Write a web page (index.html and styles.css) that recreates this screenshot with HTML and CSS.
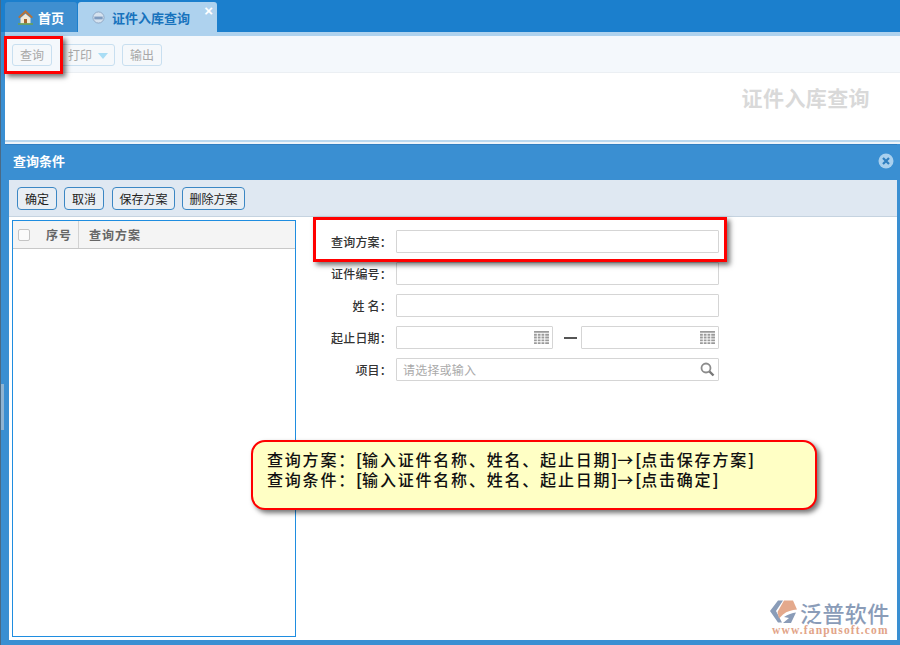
FILE: index.html
```html
<!DOCTYPE html>
<html lang="zh">
<head>
<meta charset="utf-8">
<title>证件入库查询</title>
<link rel="stylesheet" href="styles.css">
</head>
<body>
<div class="app">
  <div class="tabbar">
    <div class="tab tab-home">
      <svg class="home-icon" width="17" height="16" viewBox="0 0 17 16"><path d="M8.500 1 1 8l1.500 1.200L8.500 4l6 5.200L16 8z" fill="#b5733a"/><path d="M3.500 9 8.500 4.800 13.500 9v5.500h-10z" fill="#f3ead6"/><rect x="7" y="10" width="3" height="4.500" fill="#a5652e"/><path d="M1 15h15" stroke="#6fa34a" stroke-width="1.500"/></svg>
      <span>首页</span>
    </div>
    <div class="tab tab-active">
      <svg width="13" height="13" viewBox="0 0 14 14"><circle cx="7" cy="7" r="6" fill="#d5e2ef" stroke="#8ea6c4"/><rect x="2.500" y="6" width="9" height="3" fill="#7f9cc0"/></svg>
      <span>证件入库查询</span>
      <b class="tab-close">×</b>
    </div>
  </div>
  <div class="tab-band"></div>
  <div class="page">
    <div class="toolbar">
      <button class="tool">查询</button>
      <button class="tool tool-print">打印<i class="caret"></i></button>
      <button class="tool">输出</button>
    </div>
    <div class="heading"><h1>证件入库查询</h1></div>
    <div class="grid-line"></div>
    <section class="dialog">
      <header class="dialog-title">
        <span>查询条件</span>
        <svg width="16" height="16" viewBox="0 0 16 16"><circle cx="8" cy="8" r="7.500" fill="#a9d0ee"/><path d="m5 5 6 6m0-6-6 6" stroke="#2f7fc0" stroke-width="2.200"/></svg>
      </header>
      <div class="dialog-panel">
        <div class="actions">
          <button class="act">确定</button>
          <button class="act">取消</button>
          <button class="act act-wide act-save">保存方案</button>
          <button class="act act-wide">删除方案</button>
        </div>
        <div class="dialog-body">
          <aside class="plans">
            <div class="plans-head">
              <span class="col-check"><i class="checkbox"></i></span>
              <span class="col-no">序号</span>
              <span class="col-name">查询方案</span>
            </div>
          </aside>
          <form class="fields">
            <div class="row"><label>查询方案：</label><div class="input"></div></div>
            <div class="row"><label>证件编号：</label><div class="input"></div></div>
            <div class="row"><label>姓 名：</label><div class="input"></div></div>
            <div class="row">
              <label>起止日期：</label>
              <div class="input date">
                <svg width="15" height="14" viewBox="0 0 16 15"><path d="M0 0h16v2H0zM0 3h3v2H0zm4 0h3v2H4zm4 0h3v2H8zm4 0h4v2h-4zM0 6h3v2H0zm4 0h3v2H4zm4 0h3v2H8zm4 0h4v2h-4zM0 9h3v2H0zm4 0h3v2H4zm4 0h3v2H8zm4 0h4v2h-4zM0 12h3v2H0zm4 0h3v2H4zm4 0h3v2H8zm4 0h4v2h-4z" fill="#9a9a9a"/></svg>
              </div>
              <span class="dash"></span>
              <div class="input date date-end">
                <svg width="15" height="14" viewBox="0 0 16 15"><path d="M0 0h16v2H0zM0 3h3v2H0zm4 0h3v2H4zm4 0h3v2H8zm4 0h4v2h-4zM0 6h3v2H0zm4 0h3v2H4zm4 0h3v2H8zm4 0h4v2h-4zM0 9h3v2H0zm4 0h3v2H4zm4 0h3v2H8zm4 0h4v2h-4zM0 12h3v2H0zm4 0h3v2H4zm4 0h3v2H8zm4 0h4v2h-4z" fill="#9a9a9a"/></svg>
              </div>
            </div>
            <div class="row">
              <label>项目：</label>
              <div class="input search">
                <span>请选择或输入</span>
                <svg width="15" height="15" viewBox="0 0 15 15"><circle cx="6" cy="6" r="4.500" fill="none" stroke="#8c8c8c" stroke-width="1.800"/><path d="m9.500 9.500 4 4" stroke="#777" stroke-width="2.400"/></svg>
              </div>
            </div>
          </form>
        </div>
      </div>
    </section>
  </div>
  <i class="edge-line"></i>
  <i class="edge-handle"></i>
  <div class="mark mark-query"></div>
  <div class="mark mark-plan"></div>
  <div class="callout">
    <p>查询方案：<b>[</b>输入证件名称、姓名、起止日期<b>]</b>→<b>[</b>点击保存方案<b>]</b></p>
    <p>查询条件：<b>[</b>输入证件名称、姓名、起止日期<b>]</b>→<b>[</b>点击确定<b>]</b></p>
  </div>
  <div class="logo">
    <svg width="27" height="23" viewBox="0 0 27 23"><path d="M8 .5h5L6 11l6 11.500H8L0 11z" fill="#8a9cb8"/><path d="M14 .5h9l4 9c-5 .5-10 1.500-14 5l-4 4-1.500-6.500z" fill="#e4a98c"/><path d="M14 17c4-2.500 8-4 12-4.500l-5 10.500h-8c2-1.500 4-3.500 6-5z" fill="#8a9cb8"/></svg>
    <div class="logo-text">
      <strong>泛普软件</strong>
      <small>www.fanpusoft.com</small>
    </div>
  </div>
</div>
</body>
</html>
```
FILE: styles.css
```css
* { box-sizing: border-box; }
html, body { margin: 0; padding: 0; }
body {
  width: 900px;
  height: 645px;
  overflow: hidden;
  font-family: "Noto Sans CJK SC", "Liberation Sans", sans-serif;
  font-size: 12px;
}
button { font: inherit; padding: 0; }
.app {
  position: relative;
  width: 900px;
  height: 645px;
  background: #3a8fd2;
  overflow: hidden;
}
.tabbar {
  height: 32px;
  padding: 2px 0 0 5px;
  display: flex;
  background: #1b7fcd;
}
.tab {
  display: flex;
  align-items: center;
  height: 30px;
  font-size: 13px;
  font-weight: 700;
  border-radius: 3px 3px 0 0;
}
.tab-home {
  width: 72px;
  padding-left: 12px;
  gap: 4px;
  color: #fff;
  background: #3f8fd0;
  margin-right: 1px;
}
.tab-active {
  position: relative;
  width: 139px;
  padding-left: 14px;
  gap: 7px;
  color: #1873bd;
  background: #aed2ee;
}
.tab-close {
  position: absolute;
  top: 0;
  right: 4px;
  color: #fff;
  font: 700 15px/18px "Liberation Sans", sans-serif;
}
.tab-band {
  height: 4px;
  margin-left: 5px;
  background: #aed2ee;
}
.page {
  height: 609px;
  margin-left: 5px;
  display: flex;
  flex-direction: column;
  background: #fff;
}
.toolbar {
  height: 37px;
  flex: none;
  padding: 8px 0 0 7px;
  display: flex;
  align-items: flex-start;
  gap: 8px;
  background: #f4f8fc;
  border-bottom: 1px solid #ebeff3;
}
.tool {
  height: 22px;
  width: 40px;
  padding-bottom: 2px;
  color: #a8a8a8;
  background: #f5f8fb;
  border: 1px solid #c8dff0;
  border-radius: 3px;
}
.tool-print {
  width: 55px;
  margin-right: -1px;
  padding-right: 15px;
  position: relative;
}
.caret {
  position: absolute;
  right: 6px;
  top: 8px;
  border: 5px solid transparent;
  border-top: 6px solid #a9ddf5;
  border-bottom: 0;
}
.heading {
  height: 67px;
  flex: none;
  display: flex;
  justify-content: flex-end;
  padding: 8px 30px 0 0;
  background: #fff;
}
.heading h1 {
  margin: 0;
  font-size: 21px;
  line-height: 32px;
  font-weight: 700;
  letter-spacing: .4px;
  color: #d9d9d9;
}
.grid-line {
  height: 4px;
  flex: none;
  background: #eef4f9;
  border-top: 2px solid #b9d8ef;
}
.dialog {
  flex: 1;
  display: flex;
  flex-direction: column;
  background: #3a8fd2;
  padding: 0 3px 5px 0;
}
.dialog-title {
  height: 36px;
  flex: none;
  display: flex;
  align-items: center;
  justify-content: space-between;
  padding: 0 3px 3px 8px;
  color: #fff;
  font-size: 13px;
  font-weight: 700;
  border-top: 1px solid #2f7fc3;
}
.dialog-title span { margin-top: -2px; }
.dialog-panel {
  flex: 1;
  display: flex;
  flex-direction: column;
  margin-left: 4px;
  background: #fff;
}
.actions {
  height: 37px;
  flex: none;
  display: flex;
  align-items: flex-start;
  gap: 7px;
  padding: 7px 0 0 8px;
  background: #dfe8f2;
  border-bottom: 1px solid #c5d3e0;
}
.act {
  height: 23px;
  width: 40px;
  color: #222;
  background: #e8eef4;
  border: 1px solid #3b87c4;
  border-radius: 4px;
}
.act-wide { width: 63px; }
.act-save { margin-left: 1px; }
.dialog-body {
  flex: 1;
  display: flex;
  padding-top: 3px;
  min-height: 0;
}
.plans {
  flex: none;
  width: 284px;
  height: 417px;
  margin-left: 3px;
  background: #fff;
  border: 1px solid #1f8de0;
}
.plans-head {
  height: 28px;
  display: flex;
  align-items: center;
  color: #666;
  font-size: 12px;
  font-weight: 700;
  letter-spacing: 1px;
  background: #f4f4f4;
  border-bottom: 1px solid #c8c8c8;
}
.col-check {
  width: 65px;
  padding-left: 5px;
  display: flex;
  align-items: center;
}
.col-no {
  width: 0;
  margin-left: -32px;
  white-space: nowrap;
}
.col-name {
  height: 100%;
  display: flex;
  align-items: center;
  margin-left: 32px;
  padding-left: 10px;
  border-left: 1px solid #d2d2d2;
}
.checkbox {
  display: block;
  width: 12px;
  height: 12px;
  background: #fbfbfb;
  border: 1px solid #c4c4c4;
  border-radius: 2px;
}
.fields {
  flex: 1;
  padding: 10px 0 0 0;
  display: flex;
  flex-direction: column;
  gap: 9px;
}
.row {
  display: flex;
  align-items: center;
  height: 23px;
}
.row label {
  width: 100px;
  flex: none;
  padding-right: 4px;
  text-align: right;
  color: #333;
  font-weight: 500;
  letter-spacing: .2px;
}
.input {
  width: 323px;
  height: 23px;
  display: flex;
  align-items: center;
  justify-content: flex-end;
  padding-right: 3px;
  border: 1px solid #d5d5d5;
  background: #fff;
  border-radius: 1px;
}
.date { width: 157px; }
.date-end { width: 138px; }
.dash {
  width: 13px;
  height: 2px;
  margin: 0 4px 0 11px;
  background: #555;
}
.search {
  justify-content: space-between;
  padding: 0 3px 0 6px;
  color: #aaa;
  letter-spacing: .2px;
}
.edge-line {
  position: absolute;
  left: 0;
  top: 0;
  width: 1px;
  height: 645px;
  background: #4a6a85;
}
.edge-handle {
  position: absolute;
  left: 1px;
  top: 384px;
  width: 3px;
  height: 46px;
  background: #8fb4d2;
}
.mark {
  position: absolute;
  border: 3px solid #f00;
  box-shadow: 3px 3px 5px rgba(0, 0, 0, .55);
}
.mark-query { left: 4px; top: 36px; width: 59px; height: 38px; }
.mark-plan { left: 313px; top: 217px; width: 414px; height: 45px; }
.callout {
  position: absolute;
  left: 251px;
  top: 440px;
  width: 566px;
  height: 70px;
  padding: 7px 0 0 14px;
  background: #ffffc5;
  border: 2px solid #f00;
  border-radius: 14px;
  box-shadow: 3px 3px 5px rgba(0, 0, 0, .55);
  color: #111;
  font-size: 16px;
  font-weight: 500;
  line-height: 20px;
  letter-spacing: 1.800px;
}
.callout p { margin: 0; white-space: nowrap; }
.callout b { letter-spacing: 0; }
.logo {
  position: absolute;
  left: 770px;
  top: 600px;
  display: flex;
  align-items: flex-start;
  gap: 3px;
}
.logo-text { display: flex; flex-direction: column; align-items: flex-start; }
.logo-text strong {
  font-size: 22px;
  line-height: 24px;
  font-weight: 500;
  color: #8a9cb8;
  letter-spacing: .4px;
}
.logo-text small {
  margin: 0 0 0 -28px;
  font: 700 11.500px/12px "Liberation Serif", serif;
  color: #e2a488;
  letter-spacing: 1.150px;
  white-space: nowrap;
}
```
